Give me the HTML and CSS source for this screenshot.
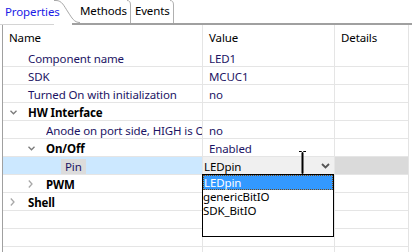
FILE: index.html
```html
<!DOCTYPE html>
<html>
<head>
<meta charset="utf-8">
<link rel="stylesheet" href="styles.css">
</head>
<body>
<div class="tabs">
  <div class="tab active">Properties</div>
  <svg class="curve" width="26" height="25" viewBox="0 0 26 25"><path d="M0 0.5 H2 C8 0.5 10 6 14 12 C18 18 20 22.5 26 22.5" fill="none" stroke="#a8a8a8" stroke-width="1"/><path d="M18 24 H26" stroke="#a0a0a0" stroke-width="2"/></svg>
  <div class="tab">Methods</div>
  <svg class="sep" width="8" height="25" viewBox="0 0 8 25"><path d="M0 0.5 C2.5 0.5 3.5 2 3.5 5 V23" fill="none" stroke="#b0b0b0"/><path d="M0 24 H8" stroke="#a0a0a0" stroke-width="2"/></svg>
  <div class="tab">Events</div>
  <svg class="sep" width="8" height="25" viewBox="0 0 8 25"><path d="M0 0.5 C2.5 0.5 3.5 2 3.5 5 V23" fill="none" stroke="#b0b0b0"/><path d="M0 24 H8" stroke="#a0a0a0" stroke-width="2"/></svg>
  <div class="fill"></div>
</div>
<div class="panel">
  <div class="grid">
    <div class="c head n"><span class="txt">Name</span></div>
    <div class="c head v">Value</div>
    <div class="c head d">Details</div>

    <div class="c n l0"><span class="tw"></span><span class="txt">Component name</span></div>
    <div class="c v">LED1</div>
    <div class="c d"></div>

    <div class="c n l0"><span class="tw"></span><span class="txt">SDK</span></div>
    <div class="c v">MCUC1</div>
    <div class="c d"></div>

    <div class="c n l0"><span class="tw"></span><span class="txt">Turned On with initialization</span></div>
    <div class="c v">no</div>
    <div class="c d"></div>

    <div class="c n l0"><span class="tw"><svg width="7" height="5" viewBox="0 0 7 5"><path d="M0.5 0.8 L3.5 3.8 L6.5 0.8" fill="none" stroke="#7a7a7a" stroke-width="1.3"/></svg></span><span class="txt b">HW Interface</span></div>
    <div class="c v"></div>
    <div class="c d"></div>

    <div class="c n l1"><span class="tw"></span><span class="txt clip">Anode on port side, HIGH is ON</span></div>
    <div class="c v">no</div>
    <div class="c d"></div>

    <div class="c n l1"><span class="tw"><svg width="7" height="5" viewBox="0 0 7 5"><path d="M0.5 0.8 L3.5 3.8 L6.5 0.8" fill="none" stroke="#7a7a7a" stroke-width="1.3"/></svg></span><span class="txt b">On/Off</span></div>
    <div class="c v">Enabled</div>
    <div class="c d"></div>

    <div class="c n l2 sel"><span class="tw"></span><span class="txt pin">Pin</span></div>
    <div class="c v edit"><span class="etext">LEDpin</span><span class="drop"><svg width="9" height="6" viewBox="0 0 9 6"><path d="M1 1 L4.5 4.5 L8 1" fill="none" stroke="#555" stroke-width="1.8"/></svg></span>
      <svg class="ibeam" width="9" height="24" viewBox="0 0 9 24"><path d="M1 0.5 H3.5 L4.5 1.5 L5.5 0.5 H8 M1 23.5 H3.5 L4.5 22.5 L5.5 23.5 H8" fill="none" stroke="#000" stroke-width="1"/><path d="M4.5 1.5 V22.5" stroke="#000" stroke-width="2"/></svg>
      <div class="list">
        <div class="item hi">LEDpin</div>
        <div class="item">genericBitIO</div>
        <div class="item">SDK_BitIO</div>
      </div>
    </div>
    <div class="c d dk"></div>

    <div class="c n l1"><span class="tw"><svg width="5" height="8" viewBox="0 0 5 8"><path d="M0.8 0.5 L4 4 L0.8 7.5" fill="none" stroke="#a8a8a8" stroke-width="1.3"/></svg></span><span class="txt b">PWM</span></div>
    <div class="c v"></div>
    <div class="c d"></div>

    <div class="c n l0"><span class="tw"><svg width="5" height="8" viewBox="0 0 5 8"><path d="M0.8 0.5 L4 4 L0.8 7.5" fill="none" stroke="#a8a8a8" stroke-width="1.3"/></svg></span><span class="txt b">Shell</span></div>
    <div class="c v"></div>
    <div class="c d"></div>

    <div class="c n"></div><div class="c v"></div><div class="c d"></div>
    <div class="c n"></div><div class="c v"></div><div class="c d"></div>
    <div class="c n"></div><div class="c v"></div><div class="c d"></div>
  </div>
</div>
</body>
</html>
```
FILE: styles.css
```css
* { box-sizing: border-box; }
html, body { margin: 0; padding: 0; background: #fff; }
body {
  width: 412px; height: 252px; overflow: hidden;
  font-family: "Noto Sans", "DejaVu Sans", sans-serif;
  font-size: 11.5px;
  letter-spacing: -0.12px;
  color: #1c1464;
}
.tabs {
  display: flex;
  height: 25px;
  align-items: stretch;
}
.tab {
  display: flex;
  align-items: center;
  padding-bottom: 2px;
  color: #000;
  border-bottom: 2px solid #a0a0a0;
  white-space: nowrap;
}
.tab.active {
  color: #1a1ae6;
  padding-left: 5px;
  width: 54px;
  border-bottom: 1px solid #d4d4d4;
}
.curve, .sep { display: block; flex: none; }
.fill { flex: 1; border-bottom: 2px solid #a0a0a0; }

.panel {
  margin-left: 2px;
  width: 407px;
  border-left: 1px solid #a0a0a0;
  border-right: 1px solid #e3e3e3;
  height: 227px;
  overflow: hidden;
}
.grid {
  display: grid;
  grid-template-columns: 200px 132px 1fr;
}
.c {
  height: 18px;
  border-bottom: 1px solid #e5e5e5;
  border-right: 1px solid #e5e5e5;
  display: flex;
  align-items: center;
  white-space: nowrap;
  overflow: hidden;
  padding-top: 1px;
}
.c.d { border-right: none; }
.c.head {
  height: 24px;
  border-bottom: none;
  color: #000;
  padding-top: 1px;
}
.head.n { padding-left: 6px; }
.v { padding-left: 6px; }
.head.d { padding-left: 6px; }
.n.l0 { padding-left: 7px; }
.n.l1 { padding-left: 25px; }
.n.l2 { padding-left: 43px; }
.tw {
  width: 18px; flex: none;
  display: flex; align-items: center;
}
.tw svg { display: block; }
.clip { overflow: hidden; min-width: 0; }
.b { font-weight: bold; color: #000; }
.sel { background: #cce8ff; }
.pin {
  background: #dcdcdc;
  margin-left: -3px;
  padding: 0 4px;
  height: 15px;
  display: flex; align-items: center;
}
.edit {
  background: #f0f0f0;
  padding-left: 1px;
  overflow: visible;
  position: relative;
  color: #000;
}
.etext { flex: 1; }
.drop {
  width: 16px; height: 17px; flex: none;
  display: flex; align-items: center; justify-content: center;
  margin-right: 1px;
}
.drop svg { display: block; }
.dk { background: #dadada; }
.ibeam {
  position: absolute;
  left: 95px;
  top: -6px;
  z-index: 3;
}
.list {
  position: absolute;
  left: -1px;
  top: 17px;
  width: 132px;
  height: 63px;
  border: 1px solid #000;
  background: #fff;
  z-index: 2;
  color: #000;
}
.item {
  height: 14px;
  line-height: 13px;
  padding-left: 0;
}
.item.hi {
  height: 15px;
  background: #3399ff;
  color: #fff;
  border: 1px dotted #7a4a10;
}
```
